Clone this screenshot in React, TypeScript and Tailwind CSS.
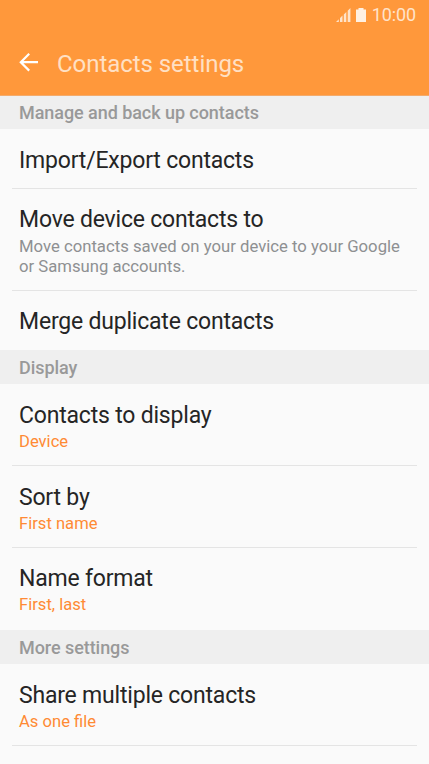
type SettingsItem = {
  title: string;
  description?: string;
  value?: string;
  height: string;
  padding?: string;
};

type SettingsSection = {
  heading: string;
  height: string;
  items: SettingsItem[];
};

const sections: SettingsSection[] = [
  {
    heading: "Manage and back up contacts",
    height: "h-[33px]",
    items: [
      { title: "Import/Export contacts", height: "h-[60px]" },
      {
        title: "Move device contacts to",
        description:
          "Move contacts saved on your device to your Google or Samsung accounts.",
        height: "h-[102px]",
        padding: "pt-[17px]",
      },
      {
        title: "Merge duplicate contacts",
        height: "h-[59px]",
        padding: "pt-[17px]",
      },
    ],
  },
  {
    heading: "Display",
    height: "h-[34px]",
    items: [
      { title: "Contacts to display", value: "Device", height: "h-[82px]" },
      { title: "Sort by", value: "First name", height: "h-[82px]" },
      {
        title: "Name format",
        value: "First, last",
        height: "h-[82px]",
        padding: "pt-[17px]",
      },
    ],
  },
  {
    heading: "More settings",
    height: "h-[34px]",
    items: [
      {
        title: "Share multiple contacts",
        value: "As one file",
        height: "h-[82px]",
      },
      { title: "", height: "h-[59px]" },
    ],
  },
];

function StatusBar() {
  return (
    <div className="flex h-[30px] items-center justify-end pr-[13px] text-[#ffe3ca]">
      <svg width="15" height="14" viewBox="0 0 15 14" fill="currentColor">
        <path d="M0 14l2.8-2.7V14zM4 14v-4l2.5-2.4V14zM7.8 14V6.4l2.5-2.4V14zM11.7 14V2.7L14.4 0v14z" />
      </svg>
      <svg
        className="ml-[5px]"
        width="10"
        height="14"
        viewBox="0 0 10 14"
        fill="#fff0e2"
      >
        <path d="M2.5 0h5v1.5H10V14H0V1.5h2.5z" />
      </svg>
      <span className="ml-1.5 text-[18px] leading-[30px] tracking-[-0.1px]">
        10:00
      </span>
    </div>
  );
}

function Header() {
  return (
    <header className="h-24 border-b border-[#f3ab6c] bg-[#ff983b]">
      <StatusBar />
      <div className="flex h-[66px] items-center pl-[19px]">
        <svg
          width="20"
          height="20"
          viewBox="0 0 20 20"
          fill="none"
          stroke="white"
          strokeWidth="2.2"
        >
          <path d="M19 9.2H2M10.2 0.8 1.8 9.2l8.4 8.4" />
        </svg>
        <h1 className="ml-[18px] pt-px text-2xl tracking-[-0.05px] text-[#ffe0c4]">
          Contacts settings
        </h1>
      </div>
    </header>
  );
}

function Row({ item, last }: { item: SettingsItem; last: boolean }) {
  return (
    <li className={`flex flex-col px-3 ${item.height}`}>
      <div
        className={`flex-1 px-[7px] ${item.padding ?? "pt-[18px]"} ${
          last ? "" : "border-b border-[#e4e4e4]"
        }`}
      >
        <div className="text-[23px] leading-7 tracking-[-0.2px] text-[#252525]">
          {item.title}
        </div>
        {item.description && (
          <p className="pt-[3px] text-[16.7px] leading-5 text-[#8e9092]">
            {item.description}
          </p>
        )}
        {item.value && (
          <p className="text-[16.6px] leading-6 text-[#ff8a34]">{item.value}</p>
        )}
      </div>
    </li>
  );
}

export default function App() {
  return (
    <main className="h-screen overflow-hidden bg-[#fafafa] font-['Roboto',sans-serif]">
      <Header />
      {sections.map((section) => (
        <section key={section.heading}>
          <h2
            className={`flex items-center bg-[#efefef] px-[19px] pt-px text-lg font-medium tracking-[-0.06px] text-[#999999] ${section.height}`}
          >
            {section.heading}
          </h2>
          <ul>
            {section.items.map((item, index) => (
              <Row
                key={item.title}
                item={item}
                last={index === section.items.length - 1}
              />
            ))}
          </ul>
        </section>
      ))}
    </main>
  );
}
